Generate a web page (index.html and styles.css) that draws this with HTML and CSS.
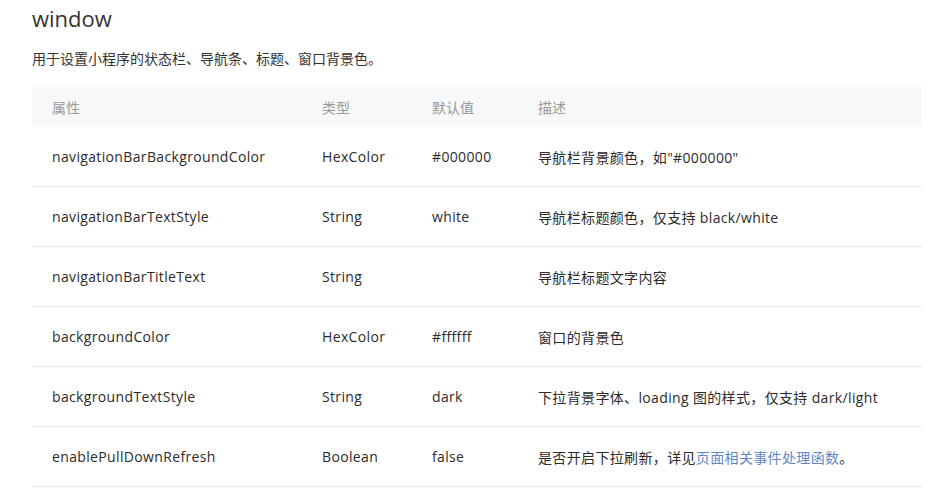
FILE: index.html
```html
<!DOCTYPE html>
<html lang="zh-CN">
<head>
<meta charset="utf-8">
<title>window</title>
<link rel="stylesheet" href="styles.css">
</head>
<body>
<div class="page">
  <h2 class="title">window</h2>
  <p class="intro">用于设置小程序的状态栏、导航条、标题、窗口背景色。</p>
  <table class="props">
    <thead>
      <tr><th class="c1">属性</th><th class="c2">类型</th><th class="c3">默认值</th><th class="c4">描述</th></tr>
    </thead>
    <tbody>
      <tr><td>navigationBarBackgroundColor</td><td>HexColor</td><td>#000000</td><td>导航栏背景颜色，如"#000000"</td></tr>
      <tr><td>navigationBarTextStyle</td><td>String</td><td>white</td><td>导航栏标题颜色，仅支持 black/white</td></tr>
      <tr><td>navigationBarTitleText</td><td>String</td><td></td><td>导航栏标题文字内容</td></tr>
      <tr><td>backgroundColor</td><td>HexColor</td><td>#ffffff</td><td>窗口的背景色</td></tr>
      <tr><td>backgroundTextStyle</td><td>String</td><td>dark</td><td>下拉背景字体、loading 图的样式，仅支持 dark/light</td></tr>
      <tr><td>enablePullDownRefresh</td><td>Boolean</td><td>false</td><td>是否开启下拉刷新，详见<a class="link" href="#">页面相关事件处理函数</a>。</td></tr>
    </tbody>
  </table>
</div>
</body>
</html>
```
FILE: styles.css
```css
html, body {
  margin: 0;
  padding: 0;
  background: #fff;
}
body {
  font-family: "Open Sans", "Noto Sans CJK SC", sans-serif;
  color: #333;
  font-size: 14px;
}
.page {
  padding: 0 14px 0 32px;
}
.title {
  margin: 0;
  padding-top: 4px;
  font-size: 22px;
  font-weight: normal;
  line-height: 28px;
  color: #333;
}
.intro {
  margin: 16px 0 0;
  line-height: 22px;
  font-size: 14px;
  color: #333;
}
.props {
  margin-top: 17px;
  width: 890px;
  border-collapse: collapse;
  table-layout: fixed;
}
.props th {
  background: #f7f8fa;
  height: 40px;
  padding: 0 0 0 20px;
  text-align: left;
  font-weight: normal;
  color: #999;
  font-size: 14px;
}
.props .c1 { width: 250px; }
.props .c2 { width: 90px; }
.props .c3 { width: 86px; }
.props td {
  height: 59px;
  padding: 0 0 0 20px;
  border-bottom: 1px solid #e7e7e7;
  font-size: 14px;
  letter-spacing: 0.35px;
  color: #2b2b2b;
  white-space: nowrap;
}
.link {
  color: #5f87c5;
  text-decoration: none;
}
```
